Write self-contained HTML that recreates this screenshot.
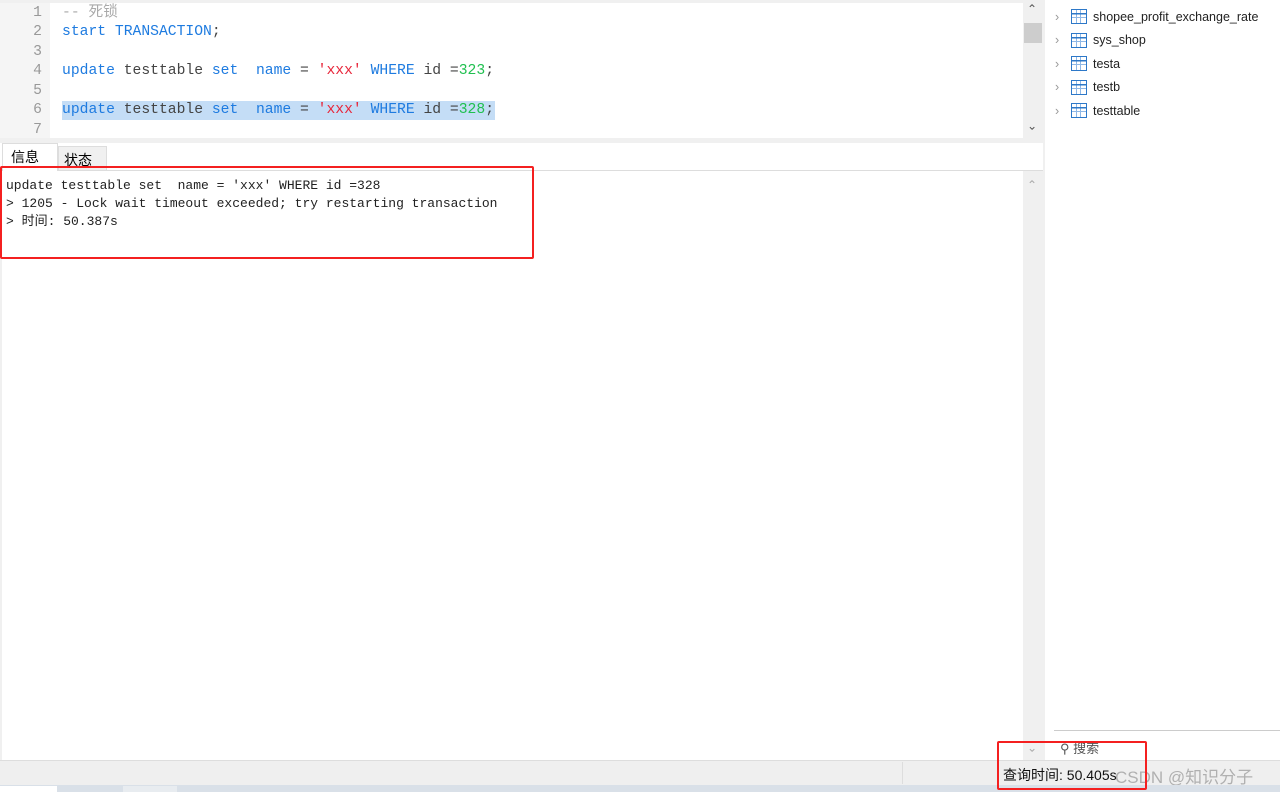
<!DOCTYPE html>
<html><head><meta charset="utf-8"><style>
*{margin:0;padding:0;box-sizing:border-box}
body{width:1280px;height:792px;position:relative;overflow:hidden;background:#f0f0f0;font-family:"Liberation Sans","Noto Sans CJK SC",sans-serif}
.abs{position:absolute}
.ln{position:absolute;left:0;width:42px;text-align:right;color:#999;font-family:"Liberation Mono",monospace;font-size:14.7px;line-height:19px;height:19px}
.cl{position:absolute;left:62px;font-family:"Liberation Mono","Noto Sans CJK SC",monospace;font-size:14.7px;line-height:19px;height:19px;white-space:pre;color:#444}
.k{color:#1e7be0}.s{color:#e8283c}.n{color:#20c050}.c{color:#aaa}
.out{font-family:"Liberation Mono","Noto Sans CJK SC",monospace;font-size:13px;color:#222;white-space:pre;line-height:18px}
.tree{font-size:12.5px;color:#222}
.row{display:flex;align-items:center;gap:6px;height:23.5px}
.ico{width:16px;height:15px;border:1.5px solid #2d78c8;background:
linear-gradient(#2d78c8,#2d78c8) 0 3px/100% 1.5px no-repeat,
linear-gradient(#8fb8e6,#8fb8e6) 0 7px/100% 1px no-repeat,
linear-gradient(#8fb8e6,#8fb8e6) 4px 0/1px 100% no-repeat,
linear-gradient(#8fb8e6,#8fb8e6) 8px 0/1px 100% no-repeat;}
</style></head><body>
<div class="abs" style="left:2px;top:3px;width:1021px;height:135px;background:#fff"></div>
<div class="abs" style="left:0;top:3px;width:50px;height:135px;background:#f5f5f5"></div>
<div class="abs" style="left:62px;top:101px;width:433px;height:19px;background:#c4ddf6"></div>
<div class="ln" style="top:4px">1</div><div class="cl" style="top:4px"><span class="c">-- 死锁</span></div>
<div class="ln" style="top:23px">2</div><div class="cl" style="top:23px"><span class="k">start TRANSACTION</span>;</div>
<div class="ln" style="top:43px">3</div>
<div class="ln" style="top:62px">4</div><div class="cl" style="top:62px"><span class="k">update</span> testtable <span class="k">set</span>  <span class="k">name</span> = <span class="s">'xxx'</span> <span class="k">WHERE</span> id =<span class="n">323</span>;</div>
<div class="ln" style="top:82px">5</div>
<div class="ln" style="top:101px">6</div><div class="cl" style="top:101px"><span class="k">update</span> testtable <span class="k">set</span>  <span class="k">name</span> = <span class="s">'xxx'</span> <span class="k">WHERE</span> id =<span class="n">328</span>;</div>
<div class="ln" style="top:121px">7</div>
<div class="abs" style="left:1023px;top:0;width:20px;height:138px;background:#f0f0f0"></div>
<div class="abs" style="left:1024px;top:23px;width:18px;height:20px;background:#cdcdcd"></div>
<div class="abs" style="left:1027px;top:2px;font-size:12px;color:#555">&#8963;</div>
<div class="abs" style="left:1027px;top:118px;font-size:12px;color:#555;transform:rotate(180deg)">&#8963;</div>
<div class="abs" style="left:0;top:143px;width:1043px;height:28px;background:#fff"></div>
<div class="abs" style="left:0;top:170px;width:1043px;height:1px;background:#ddd"></div>
<div class="abs" style="left:2px;top:143px;width:56px;height:28px;background:#fff;border:1px solid #ddd;border-bottom:none;font-size:14px;padding:3px 0 0 8px">信息</div>
<div class="abs" style="left:58px;top:146px;width:49px;height:24px;background:#f0f0f0;border:1px solid #ddd;border-bottom:none;font-size:14px;padding:3px 0 0 5px">状态</div>
<div class="abs" style="left:2px;top:171px;width:1021px;height:589px;background:#fff"></div>
<div class="abs out" style="left:6px;top:177px">update testtable set  name = 'xxx' WHERE id =328
&gt; 1205 - Lock wait timeout exceeded; try restarting transaction
&gt; 时间: 50.387s</div>
<div class="abs" style="left:1023px;top:171px;width:20px;height:589px;background:#f0f0f0"></div>
<div class="abs" style="left:1027px;top:178px;font-size:12px;color:#aaa">&#8963;</div>
<div class="abs" style="left:1027px;top:740px;font-size:12px;color:#aaa;transform:rotate(180deg)">&#8963;</div>
<div class="abs" style="left:1045px;top:0;width:235px;height:760px;background:#fff"></div>
<div class="abs tree" style="left:1055px;top:5px">
<div class="row"><span style="color:#999;width:10px">&#8250;</span><span class="ico"></span><span>shopee_profit_exchange_rate</span></div>
<div class="row"><span style="color:#999;width:10px">&#8250;</span><span class="ico"></span><span>sys_shop</span></div>
<div class="row"><span style="color:#999;width:10px">&#8250;</span><span class="ico"></span><span>testa</span></div>
<div class="row"><span style="color:#999;width:10px">&#8250;</span><span class="ico"></span><span>testb</span></div>
<div class="row"><span style="color:#999;width:10px">&#8250;</span><span class="ico"></span><span>testtable</span></div>
</div>
<div class="abs" style="left:1054px;top:730px;width:226px;height:1px;background:#ccc"></div>
<div class="abs" style="left:1060px;top:738px;font-size:13px;color:#555">&#9906; 搜索</div>
<div class="abs" style="left:0;top:760px;width:1280px;height:25px;background:#efefef;border-top:1px solid #ddd"></div>
<div class="abs" style="left:902px;top:762px;width:1px;height:22px;background:#ddd"></div>
<div class="abs" style="left:1003px;top:765px;font-size:14px;color:#111">查询时间: 50.405s</div>
<div class="abs" style="left:1115px;top:763px;font-size:17px;color:rgba(150,150,150,.7)">CSDN @知识分子_</div>
<div class="abs" style="left:0;top:785px;width:1280px;height:7px;background:#d9e0e8"></div>
<div class="abs" style="left:0;top:786px;width:57px;height:6px;background:#fff"></div>
<div class="abs" style="left:123px;top:786px;width:54px;height:6px;background:#e8ecf0"></div>
<div class="abs" style="left:0;top:166px;width:534px;height:93px;border:2px solid #f42020;border-radius:2px"></div>
<div class="abs" style="left:997px;top:741px;width:150px;height:49px;border:2px solid #f42020;border-radius:2px"></div>
</body></html>
